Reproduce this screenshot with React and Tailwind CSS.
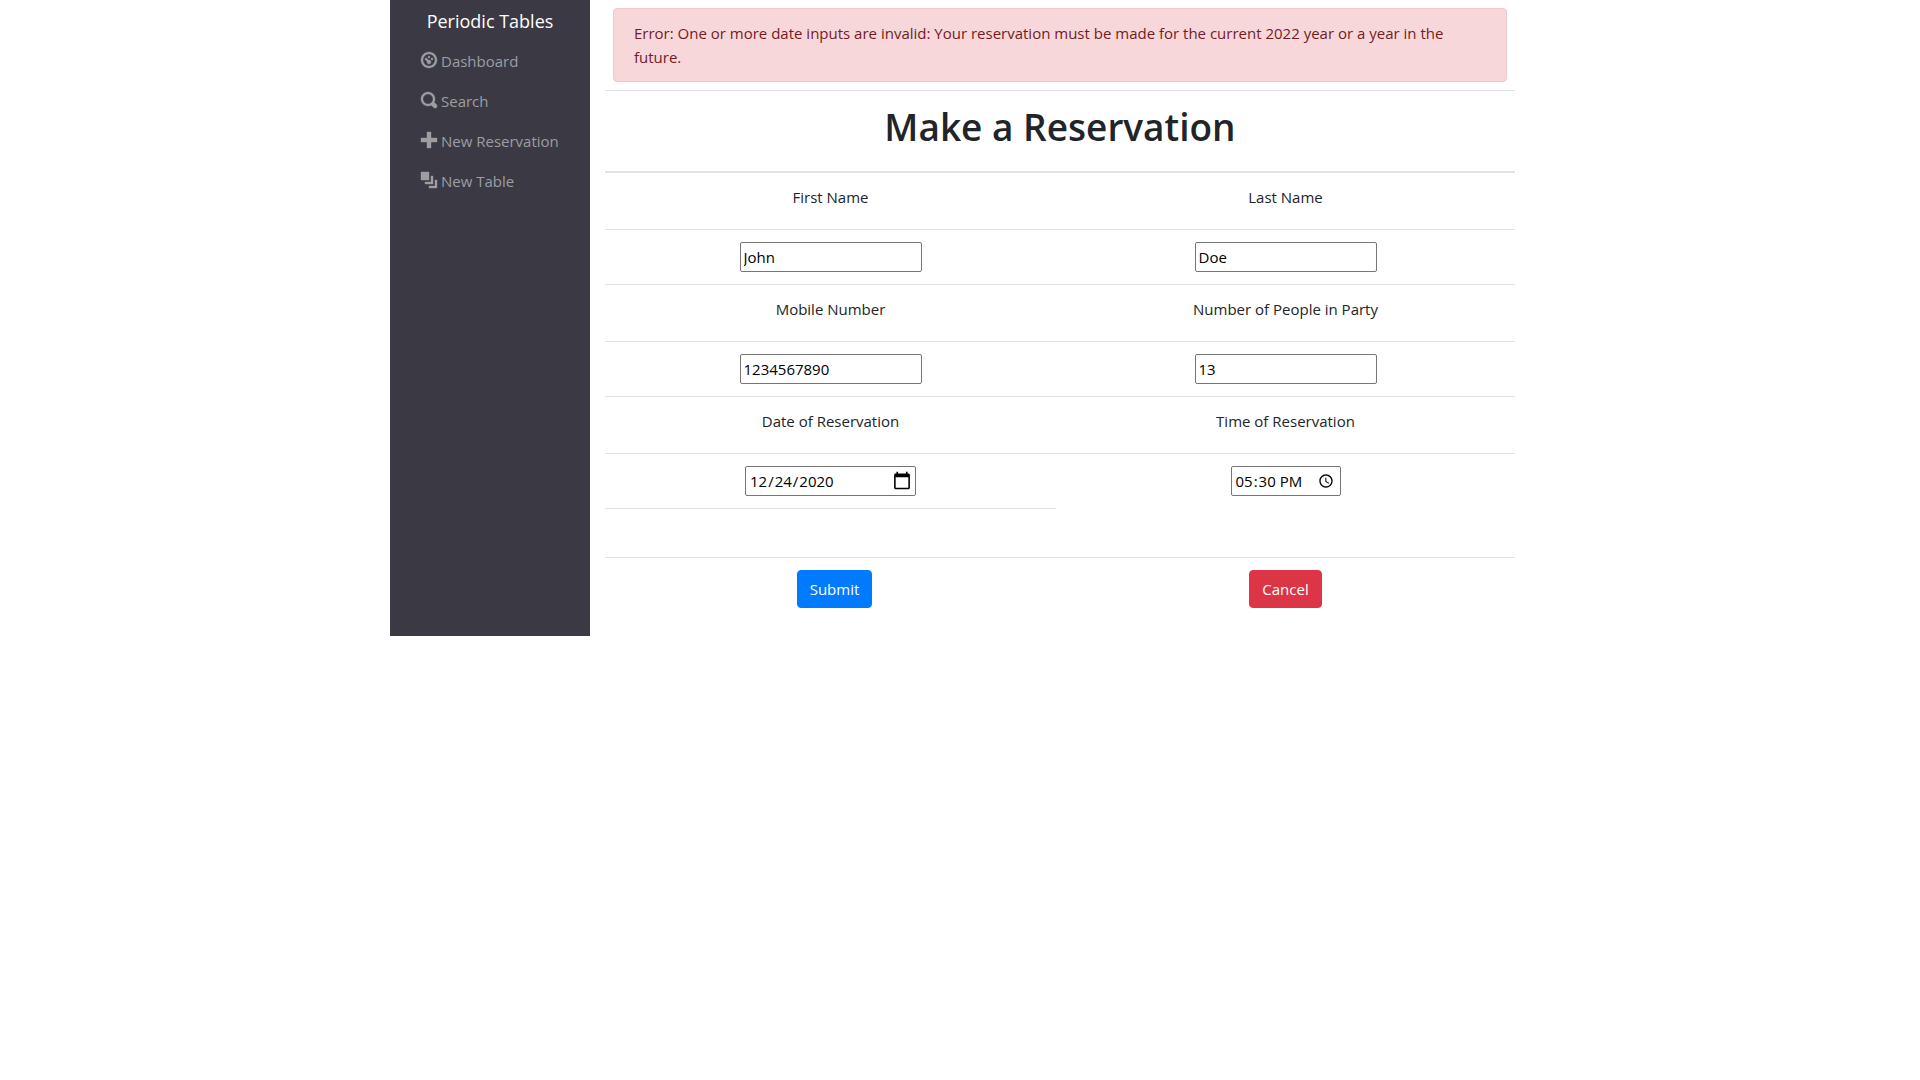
const ICONS = {
  dashboard:
    "M4 0c-2.2 0-4 1.8-4 4s1.8 4 4 4 4-1.8 4-4-1.8-4-4-4zm0 1c1.66 0 3 1.34 3 3s-1.34 3-3 3-3-1.34-3-3 1.34-3 3-3zm0 1c-.28 0-.5.22-.5.5s.22.5.5.5.5-.22.5-.5-.22-.5-.5-.5zm-1.66 1a.5.5 0 0 0-.19.84l.91.91c-.02.08-.06.16-.06.25 0 .55.45 1 1 1s1-.45 1-1-.45-1-1-1c-.09 0-.17.04-.25.06l-.91-.91a.5.5 0 0 0-.44-.16.5.5 0 0 0-.06 0zm3.16 0c-.28 0-.5.22-.5.5s.22.5.5.5.5-.22.5-.5-.22-.5-.5-.5z",
  search:
    "M3.5 0c-1.93 0-3.5 1.57-3.5 3.5s1.57 3.5 3.5 3.5c.59 0 1.17-.14 1.66-.41a1 1 0 0 0 .13.13l1 1a1.02 1.02 0 1 0 1.44-1.44l-1-1a1 1 0 0 0-.16-.13c.27-.49.44-1.06.44-1.66 0-1.93-1.55-3.5-3.5-3.5zm0 1c1.39 0 2.5 1.11 2.5 2.5 0 .66-.24 1.27-.66 1.72-.01.01-.02.02-.03.03a1 1 0 0 0-.13.13c-.44.4-1.04.63-1.69.63-1.39 0-2.5-1.11-2.5-2.5s1.11-2.5 2.5-2.5z",
  plus: "M3 0v3h-3v2h3v3h2v-3h3v-2h-3v-3h-2z",
  layers: "M0 0v4h4v-4h-4zm5 2v3h-3v1h4v-4h-1zm2 2v3h-3v1h4v-4h-1z",
};

const LINKS = [
  { label: "Dashboard", icon: "dashboard", href: "#dashboard" },
  { label: "Search", icon: "search", href: "#search" },
  { label: "New Reservation", icon: "plus", href: "#reservations-new" },
  { label: "New Table", icon: "layers", href: "#tables-new" },
];

const FIELDS = [
  [
    { id: "first_name", label: "First Name", type: "text", value: "John" },
    { id: "last_name", label: "Last Name", type: "text", value: "Doe" },
  ],
  [
    { id: "mobile_number", label: "Mobile Number", type: "text", value: "1234567890" },
    { id: "people", label: "Number of People in Party", type: "text", value: "13" },
  ],
  [
    { id: "reservation_date", label: "Date of Reservation", type: "date", value: "2020-12-24" },
    { id: "reservation_time", label: "Time of Reservation", type: "time", value: "17:30" },
  ],
];

const INPUT_STYLE = {
  text: "w-[182px]",
  date: "w-[171px] [&::-webkit-calendar-picker-indicator]:size-5 [&::-webkit-calendar-picker-indicator]:bg-contain [&::-webkit-calendar-picker-indicator]:p-0",
  time: "w-[110px]",
};

function Sidebar() {
  return (
    <nav className="w-[200px] shrink-0 bg-[#3b3a44] px-4 pt-px pb-4">
      <a href="#home" className="flex h-10 items-center justify-center text-lg text-white">
        Periodic Tables
      </a>
      <ul>
        {LINKS.map((link) => (
          <li key={link.label}>
            <a
              href={link.href}
              className="flex h-10 items-center gap-1 pl-[15px] whitespace-nowrap text-[#9d9da2]"
            >
              <svg
                viewBox="0 0 8 8"
                className="mb-[3px] size-4 shrink-0 overflow-visible fill-current stroke-current stroke-[0.2]"
                aria-hidden="true"
              >
                <path d={ICONS[link.icon]} />
              </svg>
              {link.label}
            </a>
          </li>
        ))}
      </ul>
    </nav>
  );
}

function FieldRows({ pair }) {
  return (
    <>
      <tr>
        {pair.map((f) => (
          <td key={f.id} className="p-3">
            <label htmlFor={f.id} className="mb-2 block">
              {f.label}
            </label>
          </td>
        ))}
      </tr>
      <tr>
        {pair.map((f) => (
          <td key={f.id} className="border-t border-[#dee2e6] p-3">
            <input
              id={f.id}
              type={f.type}
              defaultValue={f.value}
              className={`mx-auto block h-[30px] rounded-xs border border-[#767676] bg-white px-[3px] text-black ${INPUT_STYLE[f.type]}`}
            />
          </td>
        ))}
      </tr>
    </>
  );
}

export default function App() {
  return (
    <div className="mx-auto flex max-w-[1140px] bg-white font-['Open_Sans','Noto_Sans',sans-serif] text-[15px] leading-6 text-[#212529]">
      <Sidebar />
      <main className="min-w-0 grow px-[15px] pb-4">
        <div className="p-2">
          <div
            role="alert"
            className="rounded border border-[#f5c6cb] bg-[#f8d7da] px-5 py-3 text-[#721c24]"
          >
            Error: One or more date inputs are invalid: Your reservation must be made for the
            current 2022 year or a year in the future.
          </div>
        </div>
        <form onSubmit={(e) => e.preventDefault()}>
          <table className="w-full table-fixed border-separate border-spacing-0 text-center">
            <colgroup>
              <col className="w-[451px]" />
              <col />
            </colgroup>
            <thead>
              <tr>
                <th colSpan={2} className="border-t border-b-2 border-[#dee2e6] p-3">
                  <h1 className="mb-2 text-[37px] leading-12 font-semibold">Make a Reservation</h1>
                </th>
              </tr>
            </thead>
            {FIELDS.map((pair, i) => (
              <tbody
                key={pair[0].id}
                className={
                  i > 0
                    ? "[&>tr:first-child>td]:border-t [&>tr:first-child>td]:border-[#dee2e6]"
                    : ""
                }
              >
                <FieldRows pair={pair} />
              </tbody>
            ))}
            <tbody>
              <tr>
                <td className="h-[49px] border-t border-[#dee2e6]" />
                <td />
              </tr>
              <tr>
                <td className="border-t border-[#dee2e6] p-3 pl-5">
                  <button
                    type="submit"
                    className="h-[38px] rounded border border-[#007bff] bg-[#007bff] px-3 text-white"
                  >
                    Submit
                  </button>
                </td>
                <td className="border-t border-[#dee2e6] p-3">
                  <button
                    type="button"
                    className="h-[38px] rounded border border-[#dc3545] bg-[#dc3545] px-3 text-white"
                  >
                    Cancel
                  </button>
                </td>
              </tr>
            </tbody>
          </table>
        </form>
      </main>
    </div>
  );
}
